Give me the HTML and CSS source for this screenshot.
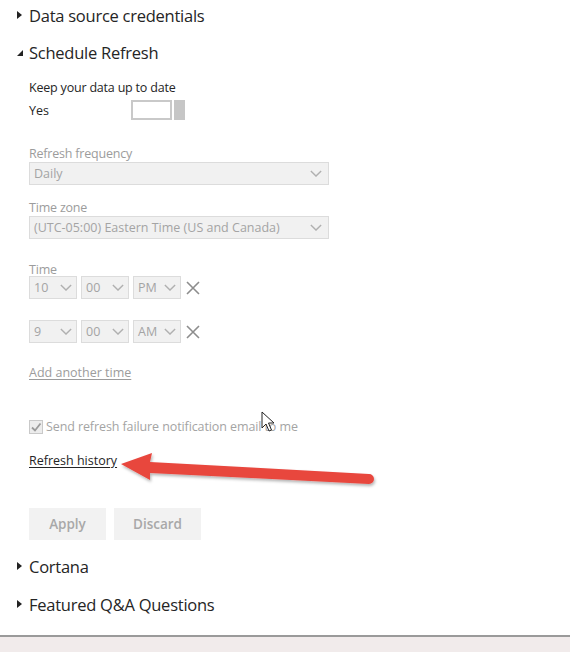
FILE: index.html
```html
<!DOCTYPE html>
<html>
<head>
<meta charset="utf-8">
<link rel="stylesheet" href="styles.css">
</head>
<body>
<div class="page">
  <div class="sec-head first"><span class="tri right"></span><span>Data source credentials</span></div>
  <div class="sec-head open"><span class="tri down"></span><span>Schedule Refresh</span></div>
  <div class="body">
    <div class="keep">Keep your data up to date</div>
    <div class="yes-row"><span class="yes">Yes</span><span class="toggle"><span class="toggle-box"></span><span class="toggle-knob"></span></span></div>

    <div class="field freq">
      <div class="label">Refresh frequency</div>
      <div class="select wide"><span>Daily</span><svg class="chev" viewBox="0 0 14 8"><path d="M1 1 L7 7 L13 1" /></svg></div>
    </div>
    <div class="field tz">
      <div class="label">Time zone</div>
      <div class="select wide"><span>(UTC-05:00) Eastern Time (US and Canada)</span><svg class="chev" viewBox="0 0 14 8"><path d="M1 1 L7 7 L13 1" /></svg></div>
    </div>
    <div class="field time">
      <div class="label">Time</div>
      <div class="time-row">
        <div class="select small"><span>10</span><svg class="chev" viewBox="0 0 14 8"><path d="M1 1 L7 7 L13 1" /></svg></div>
        <div class="select small"><span>00</span><svg class="chev" viewBox="0 0 14 8"><path d="M1 1 L7 7 L13 1" /></svg></div>
        <div class="select small"><span>PM</span><svg class="chev" viewBox="0 0 14 8"><path d="M1 1 L7 7 L13 1" /></svg></div>
        <svg class="x" viewBox="0 0 14 14"><path d="M1 1 L13 13 M13 1 L1 13" /></svg>
      </div>
      <div class="time-row second">
        <div class="select small"><span>9</span><svg class="chev" viewBox="0 0 14 8"><path d="M1 1 L7 7 L13 1" /></svg></div>
        <div class="select small"><span>00</span><svg class="chev" viewBox="0 0 14 8"><path d="M1 1 L7 7 L13 1" /></svg></div>
        <div class="select small"><span>AM</span><svg class="chev" viewBox="0 0 14 8"><path d="M1 1 L7 7 L13 1" /></svg></div>
        <svg class="x" viewBox="0 0 14 14"><path d="M1 1 L13 13 M13 1 L1 13" /></svg>
      </div>
    </div>
    <div class="add">Add another time</div>
    <div class="check-row"><span class="checkbox"><svg viewBox="0 0 12 12"><path d="M2 6.5 L5 9.5 L10.5 2.5" /></svg></span><span>Send refresh failure notification email to me</span>
      <svg class="cursor" viewBox="0 0 14 22"><path d="M1 1 L1 17 L5 13 L8 20 L10.5 19 L7.5 12 L13 12 Z" /></svg>
    </div>
    <div class="history-row"><span class="history">Refresh history</span>
      <svg class="arrow" viewBox="0 0 262 48" width="262" height="48"><defs><filter id="sh" x="-10%" y="-40%" width="120%" height="180%"><feDropShadow dx="1" dy="2" stdDeviation="1.5" flood-color="#000" flood-opacity="0.3"/></filter></defs><g filter="url(#sh)" fill="#e8463e"><path d="M2 20 L33 9 L31 18 L250 30 A5 5 0 0 1 250 40 L31 29 L31 36 Z" /></g></svg>
    </div>
    <div class="buttons"><span class="btn apply">Apply</span><span class="btn discard">Discard</span></div>
  </div>
  <div class="sec-head cortana"><span class="tri right"></span><span>Cortana</span></div>
  <div class="sec-head featured"><span class="tri right"></span><span>Featured Q&amp;A Questions</span></div>
</div>
<div class="footer"></div>
</body>
</html>
```
FILE: styles.css
```css
html, body { margin: 0; padding: 0; background: #fff; }
body { font-family: "Open Sans", "Noto Sans", sans-serif; color: #222; width: 570px; height: 652px; overflow: hidden; display: flex; flex-direction: column; }
.page { height: 635px; flex: none; }
.footer { flex: 1; border-top: 2px solid #9a9a9a; background: #f1ebeb; }

.sec-head { display: flex; align-items: center; padding-left: 17px; font-size: 16.5px; height: 24px; color: #252525; letter-spacing: -0.25px; }
.sec-head.first { margin-top: 3px; }
.sec-head.open { margin-top: 13px; }
.sec-head.cortana { margin-top: 14px; }
.sec-head.featured { margin-top: 14px; }
.tri { width: 12px; flex: none; display: inline-block; }
.tri.right { width: 0; height: 0; border-top: 4.5px solid transparent; border-bottom: 4.5px solid transparent; border-left: 5px solid #222; margin-right: 7px; margin-top: -1px; }
.tri.down { width: 0; height: 0; border-left: 6px solid transparent; border-bottom: 6px solid #222; margin-right: 6px; margin-top: 2px; }

.body { padding-left: 29px; font-size: 12.5px; }
.keep { margin-top: 16px; line-height: 16px; color: #252525; letter-spacing: -0.2px; }
.yes-row { display: flex; align-items: center; height: 22px; margin-top: 3px; }
.yes { width: 102px; color: #252525; }
.toggle { display: flex; gap: 2px; height: 20px; }
.toggle-box { width: 37px; height: 16px; border: 2px solid #c9c9c9; }
.toggle-knob { width: 11px; height: 20px; background: #c6c6c6; }

.label { color: #9c9c9c; line-height: 16px; letter-spacing: -0.2px; }
.field.freq { margin-top: 25px; }
.field.tz { margin-top: 15px; }
.field.time { margin-top: 23px; }
.select { display: flex; align-items: center; justify-content: space-between; height: 21px; border: 1px solid #dcdcdc; background: #f1f1f1; color: #a4a4a4; padding: 0 6px 0 4px; box-sizing: content-box; font-size: 12.5px; }
.select.wide { width: 288px; margin-top: 0; }
.select.small { width: 38px; padding: 0 4px 0 4px; }
.chev { width: 12px; height: 7px; fill: none; stroke: #b0b0b0; stroke-width: 1.6; }
.time-row { display: flex; align-items: center; gap: 3px; margin-top: -2px; }
.time-row .select + .select { margin-left: 1px; }
.time-row.second { margin-top: 21px; }
.x { width: 14px; height: 14px; fill: none; stroke: #8d8d8d; stroke-width: 1.6; margin-left: 2px; }

.add { margin-top: 22px; color: #9c9c9c; text-decoration: underline; text-underline-offset: 2px; line-height: 16px; }
.check-row { position: relative; display: flex; align-items: center; margin-top: 38px; color: #a4a4a4; line-height: 16px; letter-spacing: -0.1px; }
.checkbox { width: 12px; height: 12px; border: 1px solid #c9c9c9; background: #ececec; margin-right: 3px; display: inline-flex; }
.checkbox svg { width: 12px; height: 12px; fill: none; stroke: #9a9a9a; stroke-width: 1.8; }
.cursor { position: absolute; left: 232px; top: -8px; width: 14px; height: 22px; fill: #fff; stroke: #222; stroke-width: 1; }
.history-row { position: relative; margin-top: 18px; line-height: 16px; }
.history { color: #252525; text-decoration: underline; text-underline-offset: 2px; }
.arrow { position: absolute; left: 90px; top: -9px; overflow: visible; }

.buttons { display: flex; gap: 8px; margin-top: 39px; }
.btn { display: inline-flex; align-items: center; justify-content: center; height: 32px; background: #f2f2f2; color: #a8a8a8; font-size: 13.5px; font-weight: 600; }
.btn.apply { width: 77px; }
.btn.discard { width: 87px; }
```
